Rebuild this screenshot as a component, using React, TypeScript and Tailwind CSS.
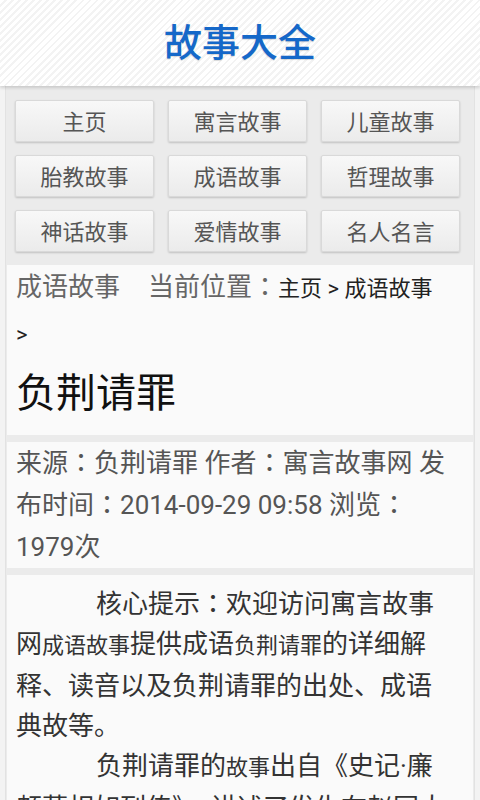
import { Fragment } from 'react';

const NAV_ITEMS = [
  '主页',
  '寓言故事',
  '儿童故事',
  '胎教故事',
  '成语故事',
  '哲理故事',
  '神话故事',
  '爱情故事',
  '名人名言',
];

// full-width colon sits centred in the reference, as in the JP cut of the font
function T({ text }: { text: string }) {
  const parts = text.split('：');
  return (
    <>
      {parts.map((p, i) => (
        <Fragment key={i}>
          {p}
          {i < parts.length - 1 && <span className="font-['Roboto','Noto_Sans_CJK_JP',sans-serif]">：</span>}
        </Fragment>
      ))}
    </>
  );
}

function NavButton({ label }: { label: string }) {
  return (
    <button className="h-[42px] rounded-[2px] border border-[#d9d9d9] bg-gradient-to-b from-[#f8f8f8] to-[#ebebeb] pt-[3px] text-[22px] leading-none text-[#555] shadow-[0_1px_2px_rgba(0,0,0,0.18)]">
      {label}
    </button>
  );
}

function Card({ className, children }: { className?: string; children: React.ReactNode }) {
  return <div className={`bg-[#fafafa] pl-[9px] pr-[28px] ${className ?? ''}`}>{children}</div>;
}

export default function App() {
  return (
    <div className="h-[800px] w-[480px] overflow-hidden bg-[#f3f3f3] font-['Roboto','Noto_Sans_CJK_SC',sans-serif]">
      <header className="relative z-10 flex h-[86px] items-center justify-center bg-[repeating-linear-gradient(135deg,#ffffff_0px,#ffffff_3px,#f3f3f3_3px,#f3f3f3_5px)] shadow-[0_2px_3px_rgba(0,0,0,0.14)]">
        <h1 className="text-[38px] leading-none font-medium text-[#1568c9] [text-shadow:0_1px_1px_rgba(0,0,0,0.15)]">
          故事大全
        </h1>
      </header>

      <div className="mx-[5px] h-[714px] border-x border-[#e2e2e2] bg-[#ebebeb] px-[1px]">
        <nav className="grid grid-cols-[repeat(3,139px)] gap-x-[14px] gap-y-[13px] pt-[14px] pb-[13px] pl-[8px]">
          {NAV_ITEMS.map((item) => (
            <NavButton key={item} label={item} />
          ))}
        </nav>

        <div className="flex flex-col gap-[7px]">
          <Card className="pb-[17px]">
            <p className="leading-[44px]">
              <span className="text-[26px] text-[#666]">成语故事</span>
              <span className="ml-[28px] text-[26px] text-[#666]">
                <T text="当前位置：" />
              </span>
              <span className="text-[22px] text-[#222]">主页 &gt; 成语故事 &gt;</span>
            </p>
            <h2 className="mt-[11px] text-[40px] leading-[48px] text-[#111]">负荆请罪</h2>
          </Card>

          <Card>
            <p className="text-[26px] leading-[42px] text-[#555]">
              <T text="来源：负荆请罪 作者：寓言故事网 发布时间：2014-09-29 09:58 浏览：1979次" />
            </p>
          </Card>

          <Card className="pt-[9px] pb-[20px]">
            <div className="text-[26px] leading-[40px] text-[#333]">
              {[
                [
                  '核心提示：欢迎访问寓言故事网',
                  ['成语故事'],
                  '提供成语',
                  ['负荆请罪'],
                  '的详细解释、读音以及负荆请罪的出处、成语典故等。',
                ],
                [
                  '负荆请罪的',
                  ['故事'],
                  '出自《史记·廉颇蔺相如列传》，讲述了发生在赵国大将廉颇和上卿蔺相如之间的故事。',
                ],
              ].map((para, i) => (
                <p key={i} className="indent-[80px]">
                  {para.map((part, j) => (
                    <Fragment key={j}>
                      {typeof part === 'string' ? <T text={part} /> : <span className="text-[22px]">{part[0]}</span>}
                    </Fragment>
                  ))}
                </p>
              ))}
            </div>
          </Card>
        </div>
      </div>
    </div>
  );
}
